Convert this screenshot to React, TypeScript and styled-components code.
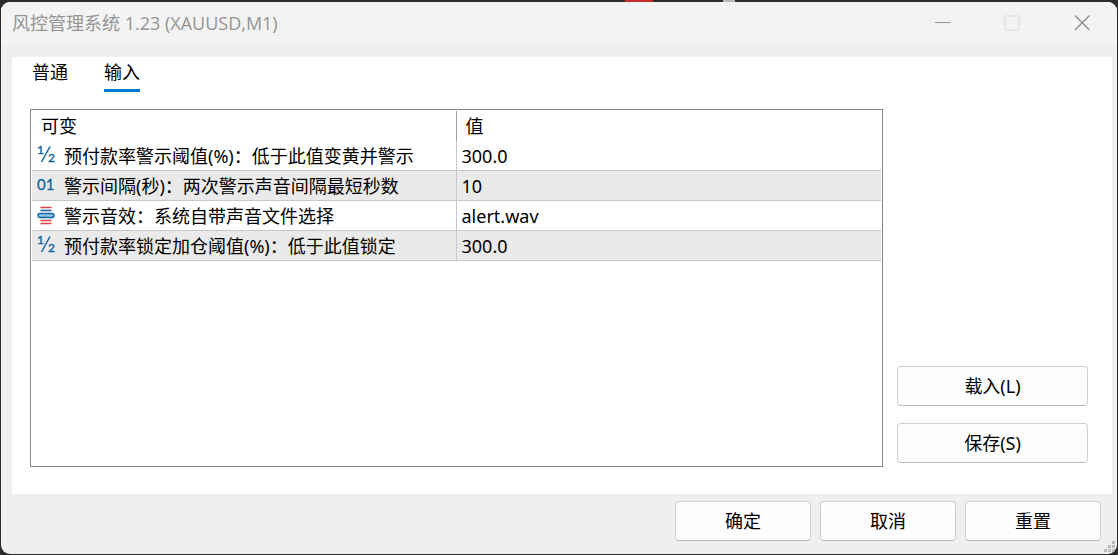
import React, { useState } from "react";
import styled, { createGlobalStyle } from "styled-components";

const GlobalStyle = createGlobalStyle`
  *, *::before, *::after { box-sizing: border-box; }
  body {
    margin: 0;
    color: #000;
    font-family: "Noto Sans", "Noto Sans CJK SC", sans-serif;
    font-size: 18px;
    line-height: 28px;
  }
  button { font: inherit; color: inherit; }
`;

const Desktop = styled.div`
  display: flex;
  min-height: 100vh;
  padding: 2px 1px 1px;
  background:
    linear-gradient(#c62b2b, #c62b2b) 625px 0 / 28px 2px no-repeat,
    linear-gradient(#b9b9b9, #b9b9b9) 723px 0 / 12px 2px no-repeat,
    #2d2b2c;
`;

const Dialog = styled.div`
  position: relative;
  flex: 1;
  display: flex;
  flex-direction: column;
  min-width: 0;
  overflow: hidden;
  border-radius: 9px;
  background: #efefef;
`;

const TitleBar = styled.header`
  display: flex;
  align-items: stretch;
  height: 43px;
  padding-left: 11px;
  background: #f3f3f3;
`;

const Title = styled.h1`
  flex: 1;
  margin: 0;
  color: #949494;
  font-family: "Open Sans", "Noto Sans CJK SC", sans-serif;
  font-size: 18px;
  font-weight: 400;
  line-height: 42px;
`;

const WindowButton = styled.button<{ $tone: string }>`
  display: flex;
  align-items: center;
  justify-content: center;
  width: 70px;
  padding: 0 0 2px;
  border: 0;
  background: none;
  color: ${(p) => p.$tone};
`;

const Panel = styled.main`
  flex: 1;
  display: flex;
  flex-direction: column;
  margin: 12px 5px 0 11px;
  padding: 0 24px 27px 18px;
  background: #fff;
`;

const TabList = styled.div`
  display: flex;
  gap: 36px;
  margin: 0 2px 17px;
`;

const Tab = styled.button<{ $active: boolean }>`
  padding: 0 0 2px;
  border: 0;
  border-bottom: 3px solid ${(p) => (p.$active ? "#0078d4" : "transparent")};
  background: none;
  line-height: 30px;
`;

const Content = styled.div`
  flex: 1;
  display: flex;
  gap: 14px;
`;

const ListBox = styled.div`
  flex: 1;
  min-width: 0;
  padding: 1px;
  border: 1px solid #828790;
`;

const ParamTable = styled.table`
  width: 100%;
  border-collapse: separate;
  border-spacing: 0;
  table-layout: fixed;
`;

const HeadCell = styled.th`
  height: 30px;
  padding: 0 9px;
  font-weight: 400;
  text-align: left;

  &:first-child {
    width: 50%;
    border-right: 1px solid #a0a0a0;
  }
`;

const Row = styled.tr`
  &:nth-child(even) { background: #eaeaea; }
`;

const Cell = styled.td`
  height: 30px;
  padding: 0 5px;
  border-bottom: 1px solid #c8c8c8;
  white-space: nowrap;

  &:first-child { border-right: 1px solid #c8c8c8; }
`;

const Param = styled.div`
  display: flex;
  align-items: center;
  gap: 9px;
`;

const Side = styled.div`
  display: flex;
  flex-direction: column;
  justify-content: flex-end;
  gap: 17px;
  width: 191px;
  padding-bottom: 4px;
`;

const PushButton = styled.button`
  height: 40px;
  min-width: 136px;
  padding: 0 8px;
  border: 1px solid #d0d0d0;
  border-bottom-color: #b8b8b8;
  border-radius: 4px;
  background: #fdfdfd;
`;

const Footer = styled.footer`
  display: flex;
  justify-content: flex-end;
  gap: 9px;
  padding: 7px 16px 13px;
`;

const Grip = styled.svg`
  position: absolute;
  right: 2px;
  bottom: 2px;
`;

const Glyph = styled.svg`
  flex: none;
  display: block;
  overflow: visible;
  fill: #0f66a0;
  font-family: Lato, sans-serif;
  font-weight: 400;
`;

type Kind = "double" | "int" | "string";

const TypeIcon = ({ kind }: { kind: Kind }) => (
  <Glyph width="18" height="28" viewBox="0 0 18 28" aria-hidden="true">
    {kind === "double" && (
      <g stroke="#0f66a0" strokeWidth="0.4">
        <text x="0" y="12" fontSize="12">1</text>
        <path d="M13 4.5 4.5 20" strokeWidth="1.5" />
        <text x="11" y="20" fontSize="12">2</text>
      </g>
    )}
    {kind === "int" && (
      <text x="0" y="18" fontSize="15" stroke="#0f66a0" strokeWidth="0.3">01</text>
    )}
    {kind === "string" && (
      <>
        <path d="M3.5 5.5h11M3.5 18.5h11M3.5 21.5h11" stroke="#e2434b" strokeWidth="1.5" />
        <path d="M3.5 8.5h11" stroke="#0f66a0" strokeWidth="1.5" />
        <rect x="1" y="11.5" width="16" height="4" rx="2" fill="#8ec5ea" stroke="#0f66a0" strokeWidth="1.4" />
      </>
    )}
  </Glyph>
);

const params: { kind: Kind; name: string; value: string }[] = [
  { kind: "double", name: "预付款率警示阈值(%)：低于此值变黄并警示", value: "300.0" },
  { kind: "int", name: "警示间隔(秒)：两次警示声音间隔最短秒数", value: "10" },
  { kind: "string", name: "警示音效：系统自带声音文件选择", value: "alert.wav" },
  { kind: "double", name: "预付款率锁定加仓阈值(%)：低于此值锁定", value: "300.0" },
];

const tabs = ["普通", "输入"];

export default function App() {
  const [active, setActive] = useState("输入");

  return (
    <>
      <GlobalStyle />
      <Desktop>
        <Dialog role="dialog" aria-labelledby="dialog-title">
          <TitleBar>
            <Title id="dialog-title">风控管理系统 1.23 (XAUUSD,M1)</Title>
            <WindowButton $tone="#939393" aria-label="最小化">
              <svg width="16" height="16"><path d="M1 7.5h15" stroke="currentColor" /></svg>
            </WindowButton>
            <WindowButton $tone="#e0e0e0" aria-label="最大化" disabled>
              <svg width="16" height="16" fill="none">
                <rect x="1" y="1" width="14" height="14" rx="1" stroke="currentColor" strokeWidth="1.5" />
              </svg>
            </WindowButton>
            <WindowButton $tone="#8c8c8c" aria-label="关闭">
              <svg width="16" height="16">
                <path d="M1 .5 15.5 15M15.5 .5 1 15" stroke="currentColor" strokeWidth="1.3" />
              </svg>
            </WindowButton>
          </TitleBar>

          <Panel>
            <TabList role="tablist">
              {tabs.map((t) => (
                <Tab key={t} role="tab" aria-selected={t === active} $active={t === active} onClick={() => setActive(t)}>
                  {t}
                </Tab>
              ))}
            </TabList>
            <Content>
              <ListBox>
                <ParamTable>
                  <thead>
                    <tr>
                      <HeadCell scope="col">可变</HeadCell>
                      <HeadCell scope="col">值</HeadCell>
                    </tr>
                  </thead>
                  <tbody>
                    {params.map((p) => (
                      <Row key={p.name}>
                        <Cell>
                          <Param>
                            <TypeIcon kind={p.kind} />
                            {p.name}
                          </Param>
                        </Cell>
                        <Cell>{p.value}</Cell>
                      </Row>
                    ))}
                  </tbody>
                </ParamTable>
              </ListBox>
              <Side>
                <PushButton>载入(L)</PushButton>
                <PushButton>保存(S)</PushButton>
              </Side>
            </Content>
          </Panel>

          <Footer>
            <PushButton>确定</PushButton>
            <PushButton>取消</PushButton>
            <PushButton>重置</PushButton>
          </Footer>
          <Grip width="11" height="11" fill="#bcbcbc" aria-hidden="true">
            <path d="M8 0h3v3h-3zM4 4h3v3h-3zM8 4h3v3h-3zM0 8h3v3h-3zM4 8h3v3h-3zM8 8h3v3h-3z" />
          </Grip>
        </Dialog>
      </Desktop>
    </>
  );
}
